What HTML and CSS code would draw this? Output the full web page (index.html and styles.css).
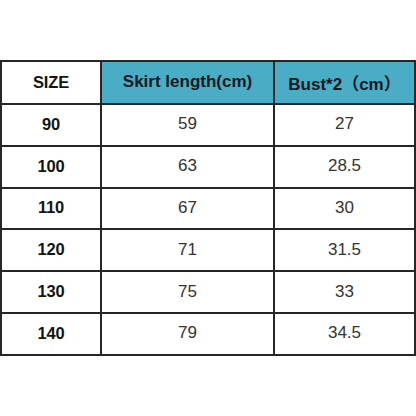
FILE: index.html
```html
<!DOCTYPE html>
<html lang="en">
<head>
<meta charset="utf-8">
<title>Size chart</title>
<link rel="stylesheet" href="styles.css">
</head>
<body>
<div class="chart">
  <div class="cell label">SIZE</div>
  <div class="cell head">Skirt length(cm)</div>
  <div class="cell head">Bust*2（cm）</div>

  <div class="cell label">90</div>
  <div class="cell">59</div>
  <div class="cell">27</div>

  <div class="cell label">100</div>
  <div class="cell">63</div>
  <div class="cell">28.5</div>

  <div class="cell label">110</div>
  <div class="cell">67</div>
  <div class="cell">30</div>

  <div class="cell label">120</div>
  <div class="cell">71</div>
  <div class="cell">31.5</div>

  <div class="cell label">130</div>
  <div class="cell">75</div>
  <div class="cell">33</div>

  <div class="cell label">140</div>
  <div class="cell">79</div>
  <div class="cell">34.5</div>
</div>
</body>
</html>
```
FILE: styles.css
```css
html, body {
  margin: 0;
  padding: 0;
  background: #ffffff;
}

body {
  font-family: "Liberation Sans", Arial, "Noto Sans CJK SC", sans-serif;
  font-size: 17px;
  color: #333333;
}

.chart {
  margin-top: 60px;
  width: 416px;
  box-sizing: border-box;
  display: grid;
  grid-template-columns: 100px 173px 141px;
  grid-template-rows: 43px repeat(6, 41.8px);
  border-left: 2px solid #262626;
  border-top: 2px solid #262626;
}

.cell {
  box-sizing: border-box;
  border-right: 2px solid #262626;
  border-bottom: 2px solid #262626;
  display: flex;
  align-items: center;
  justify-content: center;
  padding-bottom: 1px;
}

.label {
  font-size: 16.5px;
  font-weight: bold;
  color: #141414;
  letter-spacing: -0.2px;
}

.head {
  background: #4bacc6;
  font-size: 17px;
  font-weight: bold;
  color: #141a22;
}
```
